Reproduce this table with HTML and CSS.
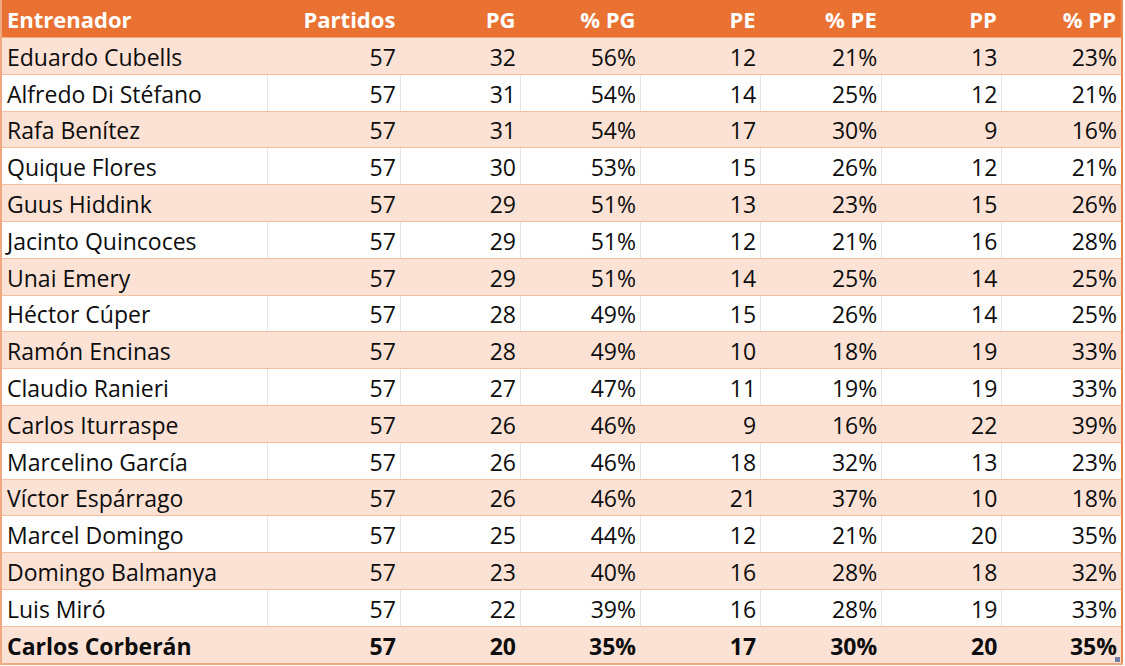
FILE: index.html
```html
<!DOCTYPE html>
<html lang="es">
<head>
<meta charset="utf-8">
<title>Entrenadores</title>
<link rel="stylesheet" href="styles.css">
</head>
<body>
<div class="wrap">
<table class="stats">
  <colgroup>
    <col class="c-name"><col class="c-part"><col class="c-n"><col class="c-n"><col class="c-n"><col class="c-n2"><col class="c-n"><col class="c-n">
  </colgroup>
  <thead>
    <tr><th class="name">Entrenador</th><th>Partidos</th><th>PG</th><th>% PG</th><th>PE</th><th>% PE</th><th>PP</th><th>% PP</th></tr>
  </thead>
  <tbody>
    <tr class="band"><td class="name">Eduardo Cubells</td><td>57</td><td>32</td><td>56%</td><td>12</td><td>21%</td><td>13</td><td>23%</td></tr>
    <tr><td class="name">Alfredo Di Stéfano</td><td>57</td><td>31</td><td>54%</td><td>14</td><td>25%</td><td>12</td><td>21%</td></tr>
    <tr class="band"><td class="name">Rafa Benítez</td><td>57</td><td>31</td><td>54%</td><td>17</td><td>30%</td><td>9</td><td>16%</td></tr>
    <tr><td class="name">Quique Flores</td><td>57</td><td>30</td><td>53%</td><td>15</td><td>26%</td><td>12</td><td>21%</td></tr>
    <tr class="band"><td class="name">Guus Hiddink</td><td>57</td><td>29</td><td>51%</td><td>13</td><td>23%</td><td>15</td><td>26%</td></tr>
    <tr><td class="name">Jacinto Quincoces</td><td>57</td><td>29</td><td>51%</td><td>12</td><td>21%</td><td>16</td><td>28%</td></tr>
    <tr class="band"><td class="name">Unai Emery</td><td>57</td><td>29</td><td>51%</td><td>14</td><td>25%</td><td>14</td><td>25%</td></tr>
    <tr><td class="name">Héctor Cúper</td><td>57</td><td>28</td><td>49%</td><td>15</td><td>26%</td><td>14</td><td>25%</td></tr>
    <tr class="band"><td class="name">Ramón Encinas</td><td>57</td><td>28</td><td>49%</td><td>10</td><td>18%</td><td>19</td><td>33%</td></tr>
    <tr><td class="name">Claudio Ranieri</td><td>57</td><td>27</td><td>47%</td><td>11</td><td>19%</td><td>19</td><td>33%</td></tr>
    <tr class="band"><td class="name">Carlos Iturraspe</td><td>57</td><td>26</td><td>46%</td><td>9</td><td>16%</td><td>22</td><td>39%</td></tr>
    <tr><td class="name">Marcelino García</td><td>57</td><td>26</td><td>46%</td><td>18</td><td>32%</td><td>13</td><td>23%</td></tr>
    <tr class="band"><td class="name">Víctor Espárrago</td><td>57</td><td>26</td><td>46%</td><td>21</td><td>37%</td><td>10</td><td>18%</td></tr>
    <tr><td class="name">Marcel Domingo</td><td>57</td><td>25</td><td>44%</td><td>12</td><td>21%</td><td>20</td><td>35%</td></tr>
    <tr class="band"><td class="name">Domingo Balmanya</td><td>57</td><td>23</td><td>40%</td><td>16</td><td>28%</td><td>18</td><td>32%</td></tr>
    <tr><td class="name">Luis Miró</td><td>57</td><td>22</td><td>39%</td><td>16</td><td>28%</td><td>19</td><td>33%</td></tr>
    <tr class="band total"><td class="name">Carlos Corberán</td><td>57</td><td>20</td><td>35%</td><td>17</td><td>30%</td><td>20</td><td>35%</td></tr>
  </tbody>
</table>
<span class="handle"></span>
</div>
</body>
</html>
```

FILE: styles.css
```css
html, body {
  margin: 0;
  padding: 0;
  background: #ffffff;
}

.wrap {
  position: relative;
  width: 1123px;
}

.stats {
  border-collapse: collapse;
  table-layout: fixed;
  width: 1123px;
  font-family: "Open Sans", "Noto Sans", sans-serif;
  font-size: 23px;
  color: #0d0d0d;
  border-left: 2px solid #f1a983;
  border-right: 2px solid #e98a55;
  border-bottom: 2px solid #f1a983;
}

.c-name { width: 266px; }
.c-part { width: 133px; }
.c-n { width: 120px; }
.c-n2 { width: 121px; }

.stats th {
  background: #e97132;
  color: #ffffff;
  font-size: 22px;
  font-weight: 700;
  text-align: right;
  height: 37px;
  padding: 0 5px 0 4px;
  line-height: 1;
  border-bottom: 1px solid #f1a983;
}

.stats th.name,
.stats td.name {
  text-align: left;
  padding-left: 5px;
}

.stats td {
  height: 32.8px;
  padding: 3px 4px 0 4px;
  text-align: right;
  line-height: 1;
  border-bottom: 1px solid #f5bfa0;
  border-left: 1px solid #e4e4e4;
  white-space: nowrap;
}

.stats td.name {
  border-left: none;
}

.stats tr.band td {
  background: #fbe2d5;
  border-left-color: #fbe2d5;
}

.stats tr.total td {
  font-weight: 700;
  border-bottom: none;
}

.handle {
  position: absolute;
  right: 3px;
  bottom: 3px;
  width: 5px;
  height: 5px;
  background: #6f7fa8;
}
```
